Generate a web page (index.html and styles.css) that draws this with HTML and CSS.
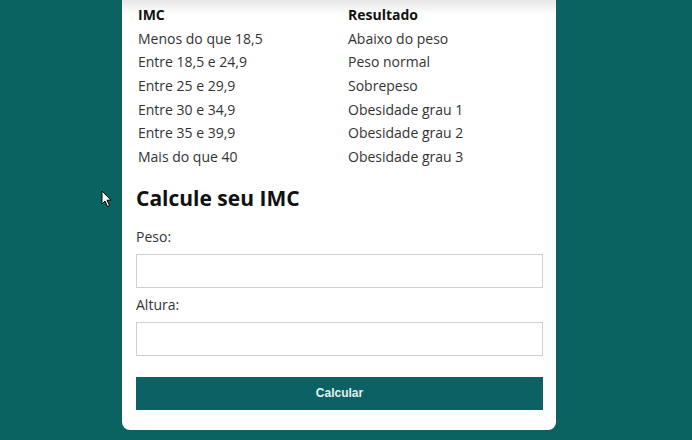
FILE: index.html
```html
<!DOCTYPE html>
<html lang="pt-BR">
<head>
<meta charset="utf-8">
<title>Calculadora de IMC</title>
<link rel="stylesheet" href="styles.css">
</head>
<body>
<main class="page">
  <section class="card">
    <table class="imc-table">
      <thead>
        <tr><th>IMC</th><th>Resultado</th></tr>
      </thead>
      <tbody>
        <tr><td>Menos do que 18,5</td><td>Abaixo do peso</td></tr>
        <tr><td>Entre 18,5 e 24,9</td><td>Peso normal</td></tr>
        <tr><td>Entre 25 e 29,9</td><td>Sobrepeso</td></tr>
        <tr><td>Entre 30 e 34,9</td><td>Obesidade grau 1</td></tr>
        <tr><td>Entre 35 e 39,9</td><td>Obesidade grau 2</td></tr>
        <tr><td>Mais do que 40</td><td>Obesidade grau 3</td></tr>
      </tbody>
    </table>
    <h2 class="title">Calcule seu IMC</h2>
    <form class="form">
      <label class="label" for="peso">Peso:</label>
      <input class="input" id="peso" type="text">
      <label class="label" for="altura">Altura:</label>
      <input class="input" id="altura" type="text">
      <button class="btn" type="button">Calcular</button>
    </form>
  </section>
</main>
<svg class="cursor" width="12" height="18" viewBox="0 0 12 18"><path d="M1 1 L1 14 L4 11 L6.5 16.5 L8.5 15.6 L6 10.2 L10 10.2 Z" fill="#fff" stroke="#000" stroke-width="1"/></svg>
</body>
</html>
```
FILE: styles.css
```css
html, body {
  margin: 0;
  padding: 0;
}
body {
  background: #0a6361;
  font-family: "Open Sans", "Noto Sans", sans-serif;
  color: #333;
  height: 440px;
  overflow: hidden;
  position: relative;
}
.page {
  padding-left: 122px;
}
.card {
  width: 407px;
  background: linear-gradient(#e6e6e6 0, #ffffff 14px) #fff;
  padding: 3px 13px 20px 14px;
  border-radius: 0 0 8px 8px;
}
.imc-table {
  width: 407px;
  border-collapse: collapse;
  font-size: 14px;
  line-height: 21.67px;
}
.imc-table th,
.imc-table td {
  text-align: left;
  padding: 1px 2px;
}
.imc-table th:first-child,
.imc-table td:first-child {
  width: 206px;
}
.imc-table th {
  font-weight: 700;
  color: #111;
}
.title {
  margin: 14px 0 7px 0;
  font-size: 21px;
  line-height: 30px;
  font-weight: 700;
  color: #111;
}
.form {
  display: flex;
  flex-direction: column;
}
.label {
  font-size: 14px;
  line-height: 20px;
  margin-top: 7px;
  color: #333;
}
.input {
  margin-top: 7px;
  height: 34px;
  box-sizing: border-box;
  border: 1px solid #cfcfcf;
  background: #fff;
  padding: 0 8px;
  font: inherit;
}
.btn {
  margin-top: 21px;
  height: 33px;
  border: none;
  background: #0b6163;
  color: #e6f2f2;
  font-family: "Liberation Sans", Arial, sans-serif;
  font-weight: 700;
  font-size: 12px;
}
.cursor {
  position: absolute;
  left: 101px;
  top: 190px;
}
```
